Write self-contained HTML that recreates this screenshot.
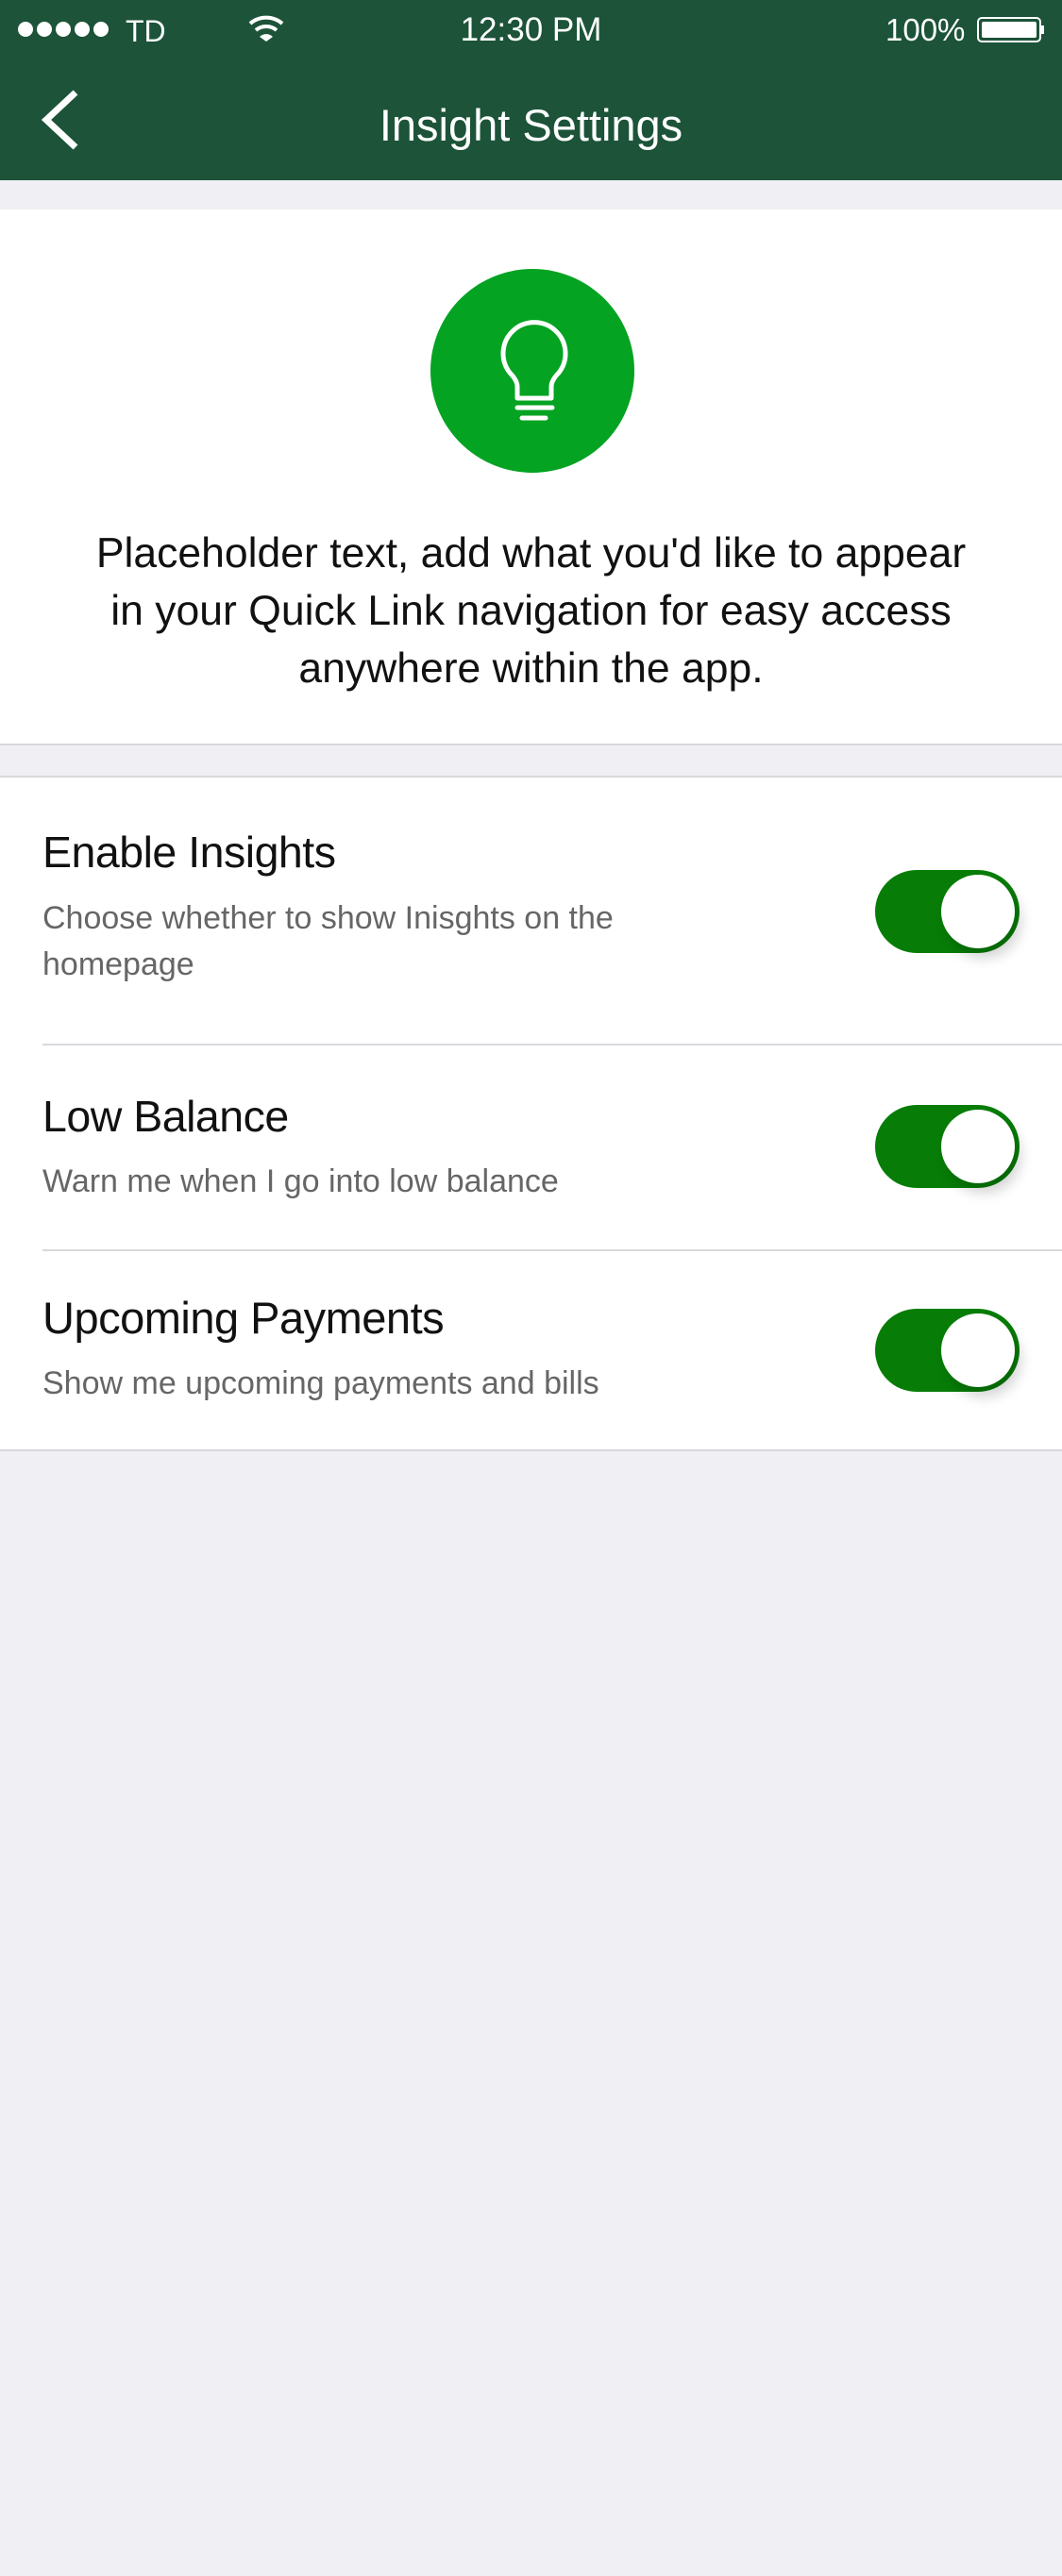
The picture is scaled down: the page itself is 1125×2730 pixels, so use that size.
<!DOCTYPE html>
<html><head><meta charset="utf-8"><style>
*{margin:0;padding:0;box-sizing:border-box}
body{width:1125px;height:2730px;background:#efeff4;font-family:"Liberation Sans",sans-serif;position:relative;overflow:hidden}
.a{position:absolute}
.t{white-space:nowrap}
.tog{position:absolute;left:927px;width:153px;height:88px;border-radius:44px;background:#077d07}
.tog::after{content:"";position:absolute;right:5px;top:5px;width:78px;height:78px;border-radius:50%;background:#fff;box-shadow:6px 10px 14px rgba(0,0,0,.18)}
.h{font-size:46.5px;color:#111;letter-spacing:-0.5px}
.s{font-size:34px;color:#666;line-height:49px}
</style></head><body>
<div class="a" style="left:0;top:0;width:1125px;height:191px;background:#1c5339"></div>
<svg class="a" style="left:0;top:0" width="1125" height="191">
<g fill="#fff"><circle cx="27" cy="31" r="8"/><circle cx="47" cy="31" r="8"/><circle cx="67" cy="31" r="8"/><circle cx="87" cy="31" r="8"/><circle cx="107" cy="31" r="8"/></g>
<g fill="none" stroke="#fff" stroke-width="4" stroke-linecap="butt">
<path d="M265,25 A26,26 0 0 1 299,25"/><path d="M271,32 A17,17 0 0 1 293,32"/></g>
<path d="M275,39 L282,44 L289,39 A10,10 0 0 0 275,39Z" fill="#fff"/>
<path d="M80,98 L49,127 L80,156" fill="none" stroke="#fff" stroke-width="7"/>
<rect x="1036" y="19" width="66" height="25" rx="4" fill="none" stroke="#fff" stroke-width="2"/>
<rect x="1040" y="23" width="58" height="17" rx="2" fill="#fff"/>
<rect x="1103" y="27" width="3" height="9" fill="#fff"/>
</svg>
<div class="a t" style="left:133px;top:15px;font-size:32px;color:#fff">TD</div>
<div class="a t" style="left:0;width:1125px;text-align:center;top:12px;font-size:35px;color:#fff">12:30 PM</div>
<div class="a t" style="left:938px;top:13px;font-size:33px;color:#fff">100%</div>
<div class="a t" style="left:0;width:1125px;text-align:center;top:105px;font-size:47px;color:#fff">Insight Settings</div>

<div class="a" style="left:0;top:222px;width:1125px;height:568px;background:#fff;border-bottom:2px solid #d8d8dc"></div>
<svg class="a" style="left:0;top:0" width="1125" height="560">
<circle cx="564" cy="393" r="108" fill="#04a322"/>
<path d="M548,422 L548,410 Q548,403 540,395 A33,33 0 1 1 592,395 Q584,403 584,410 L584,422 Z" fill="none" stroke="#fff" stroke-width="5" stroke-linejoin="round"/>
<path d="M548,432 L585,432 M553,443 L578,443" stroke="#fff" stroke-width="5" stroke-linecap="round"/>
</svg>
<div class="a" style="left:0;width:1125px;top:556px;text-align:center;font-size:44.5px;line-height:61px;color:#111">Placeholder text, add what you'd like to appear<br>in your Quick Link navigation for easy access<br>anywhere within the app.</div>

<div class="a" style="left:0;top:822px;width:1125px;height:716px;background:#fff;border-top:2px solid #d8d8dc;border-bottom:2px solid #d8d8dc"></div>
<div class="a" style="left:45px;top:1106px;width:1080px;height:2px;background:#d8d8dc"></div>
<div class="a" style="left:45px;top:1324px;width:1080px;height:2px;background:#d8d8dc"></div>

<div class="a t h" style="left:45px;top:876px">Enable Insights</div>
<div class="a s" style="left:45px;top:949px">Choose whether to show Inisghts on the<br>homepage</div>
<div class="tog" style="top:922px"></div>

<div class="a t h" style="left:45px;top:1156px">Low Balance</div>
<div class="a s" style="left:45px;top:1228px">Warn me when I go into low balance</div>
<div class="tog" style="top:1171px"></div>

<div class="a t h" style="left:45px;top:1369px;font-size:47px">Upcoming Payments</div>
<div class="a s" style="left:45px;top:1442px">Show me upcoming payments and bills</div>
<div class="tog" style="top:1387px"></div>
</body></html>
